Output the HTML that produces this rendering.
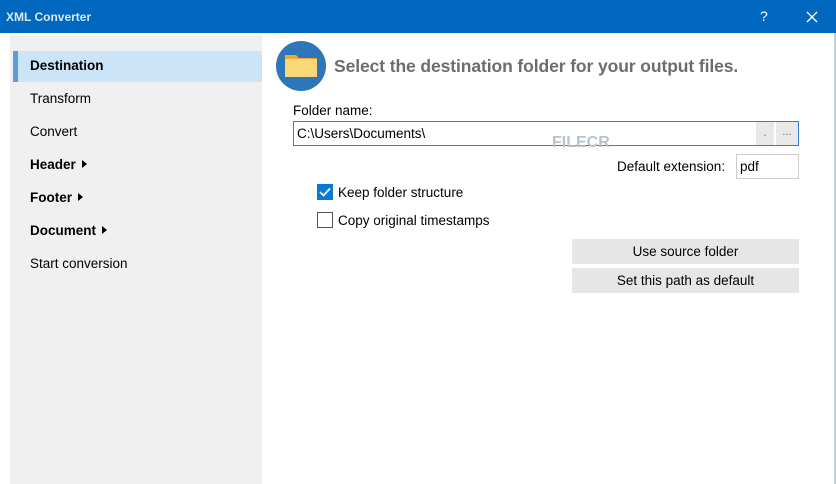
<!DOCTYPE html>
<html><head><meta charset="utf-8"><style>
*{margin:0;padding:0;box-sizing:border-box}
body{width:836px;height:484px;overflow:hidden;background:#fff;font-family:"Liberation Sans","DejaVu Sans",sans-serif;font-size:13px;color:#000;position:relative}
.t{position:absolute}
.title{left:0;top:0;width:836px;height:33px;background:#0068bf;color:#dce9f6}
.nav{left:10px;top:35px;width:252px;height:449px;background:#f0f0f0}
.item{position:absolute;left:30px;font-size:13.5px}
.b{font-weight:bold}
.sel{left:14px;top:51px;width:248px;height:31px;background:#cce4f7}
.bar{left:13px;top:51px;width:5px;height:31px;background:#5e9ed8}
.btn{position:absolute;left:572px;width:227px;height:25px;background:#e6e6e6;text-align:center;line-height:25px;font-size:13.5px}
.tri{display:inline-block;width:0;height:0;border-left:5px solid #000;border-top:4.5px solid transparent;border-bottom:4.5px solid transparent;margin-left:6px;vertical-align:1px}
</style></head><body>
<div class="t title"></div>
<div class="t" style="left:6px;top:10px;color:#d9e6f3;font-weight:bold;font-size:12px">XML Converter</div>
<div class="t" style="left:760px;top:8px;color:#fff;font-size:14px">?</div>
<svg class="t" style="left:806px;top:11px" width="12" height="12"><path d="M1 1L11 11M11 1L1 11" stroke="#fff" stroke-width="1.3"/></svg>
<div class="t" style="left:834px;top:33px;width:2px;height:451px;background:#c5ced8"></div>
<div class="t nav"></div>
<div class="t sel"></div><div class="t bar"></div>
<div class="item b" style="top:58px">Destination</div>
<div class="item" style="top:91px">Transform</div>
<div class="item" style="top:124px">Convert</div>
<div class="item b" style="top:157px">Header<span class="tri"></span></div>
<div class="item b" style="top:190px">Footer<span class="tri"></span></div>
<div class="item b" style="top:223px">Document<span class="tri"></span></div>
<div class="item" style="top:256px">Start conversion</div>
<svg class="t" style="left:276px;top:41px" width="50" height="50"><circle cx="25" cy="25" r="25" fill="#2d76b8"/><path d="M9 14h11l3 3h18v17H9z" fill="#f0a830"/><rect x="9" y="18" width="32" height="18" fill="#f9d977"/></svg>
<div class="t" style="left:334px;top:56px;font-size:17.5px;font-weight:bold;color:#6d6d6d;letter-spacing:-0.1px">Select the destination folder for your output files.</div>
<div class="t" style="left:293px;top:103px;font-size:13.5px">Folder name:</div>
<div class="t" style="left:293px;top:121px;width:506px;height:25px;border:1px solid #2f82d0"></div>
<div class="t" style="left:297px;top:126px;font-size:13.5px">C:\Users\Documents\</div>
<div class="t" style="left:756px;top:122px;width:18px;height:23px;background:#e8e8e8;text-align:center;color:#666;font-size:11px;line-height:23px">.</div>
<div class="t" style="left:776px;top:122px;width:22px;height:23px;background:#e8e8e8;text-align:center;color:#666;font-size:11px;line-height:20px">...</div>
<div class="t" style="left:552px;top:134px;color:#b9c3cc;font-weight:bold;font-size:16px">FILECR</div>
<div class="t" style="left:617px;top:159px;font-size:13.5px">Default extension:</div>
<div class="t" style="left:736px;top:154px;width:63px;height:25px;border:1px solid #ccc"></div>
<div class="t" style="left:740px;top:159px;font-size:13.5px">pdf</div>
<div class="t" style="left:317px;top:184px;width:16px;height:16px;background:#0a78d4"></div>
<svg class="t" style="left:317px;top:184px" width="16" height="16"><path d="M3 8l3.5 3.5L13 4.5" stroke="#fff" stroke-width="1.8" fill="none"/></svg>
<div class="t" style="left:338px;top:185px;font-size:13.5px">Keep folder structure</div>
<div class="t" style="left:317px;top:212px;width:16px;height:16px;border:1px solid #555"></div>
<div class="t" style="left:338px;top:213px;font-size:13.5px">Copy original timestamps</div>
<div class="btn" style="top:239px">Use source folder</div>
<div class="btn" style="top:268px">Set this path as default</div>
</body></html>
